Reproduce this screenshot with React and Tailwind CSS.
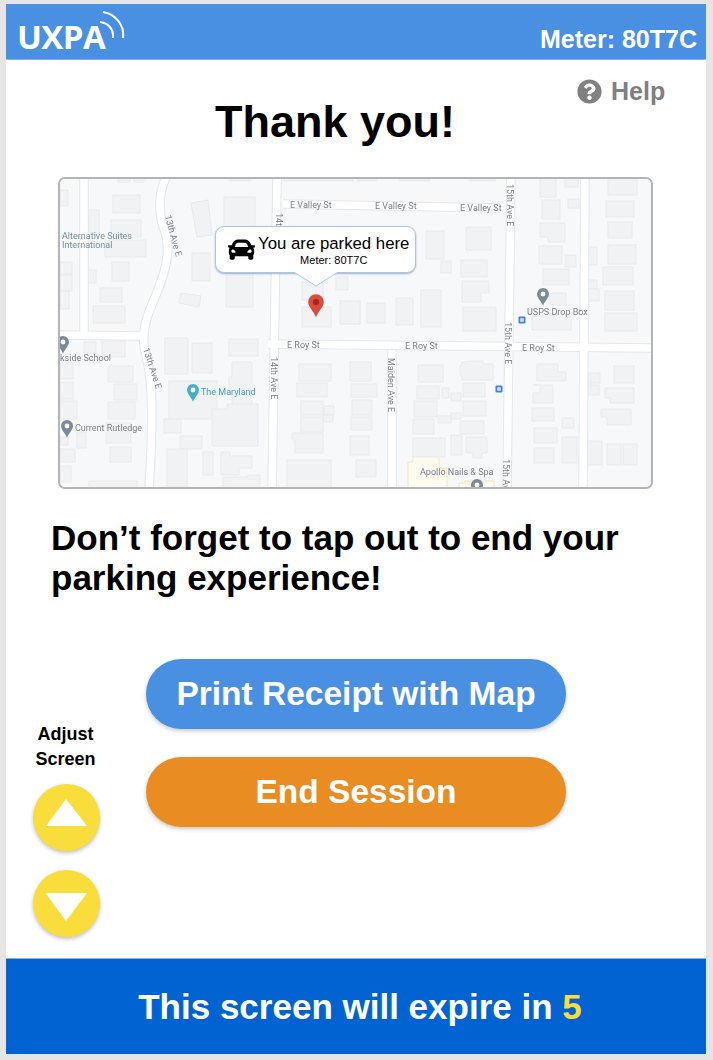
import React from "react";
import { FaCar, FaQuestionCircle } from "react-icons/fa";

const b = [
[113,195,27,18],[111,220,30,17],[105,240,41,17],[112,262,17,19],[88,270,8,13],[100,288,22,14],[93,306,32,17],[87,210,12,23],
[192,253,18,28],[224,197,31,40],[226,270,27,37],[302,282,21,18],[302,307,29,20],[336,277,12,13],[342,302,18,22],
[426,231,18,28],[441,261,10,12],[466,227,25,23],[461,260,26,17],[463,307,33,24],[421,290,20,37],[396,298,17,27],[367,303,18,20],[340,301,20,23],
[540,178,16,19],[565,177,13,10],[542,200,18,19],[568,199,11,9],[539,246,23,18],[565,255,11,12],[543,269,26,16],[550,293,16,12],[532,316,39,14],
[608,177,29,18],[606,201,28,16],[608,222,24,16],[608,245,28,19],[603,267,30,18],[605,291,29,19],[605,313,32,18],[586,247,11,18],[586,280,11,9],[586,289,13,12],
[165,338,23,36],[192,343,20,30],[229,339,29,17],[164,419,17,14],[180,436,22,13],[167,449,20,38],[203,452,10,23],[169,381,48,38],
[108,366,25,16],[114,384,23,16],[108,402,27,17],[106,423,25,20],[110,447,21,15],[77,432,9,16],[84,342,12,11],[102,341,23,16],
[60,363,13,16],[60,382,13,17],[60,401,17,18],[60,437,8,8],[60,449,15,13],[60,466,11,16],[89,481,48,8],
[299,364,32,17],[297,383,30,14],[301,401,22,14],[324,406,10,9],[323,415,10,7],[301,417,22,15],[287,460,44,29],
[350,362,21,19],[351,384,26,13],[352,400,20,15],[351,417,21,13],[350,436,19,19],[356,460,20,17],
[418,365,25,17],[417,386,22,13],[442,388,7,10],[451,393,10,8],[463,383,22,14],[414,401,23,16],[463,401,23,15],[438,416,13,7],[451,413,10,6],[413,419,21,15],[460,421,24,13],[413,438,32,19],[451,435,11,20],
[532,408,22,13],[562,418,12,10],[534,428,23,15],[534,448,20,15],[562,437,15,26],[588,373,12,10],[588,385,11,10],[614,366,20,17],[607,444,14,21],[623,444,14,21],[587,441,15,24],
[60,190,8,16],[60,262,12,12],[60,275,12,16],[60,291,9,18],[118,179,12,3],[134,179,10,3],[230,179,20,2],[283,179,70,2],[358,179,18,2],[400,179,30,2],[470,179,25,2],
];

const p = [
"M462 281h27v12h-8v9h-19z","M540 223h25v19h-17v-5h-8z","M462 362l12-1h9v3h10v16h-31v-3l-2-3v-8l2-2z","M466 437h21v16h-5v5h-9v-5h-7z",
"M537 364h21v8h8v9h-29z","M533 385h20v18h-20v-10h7v-8z","M605 388h29v15h-24v-5h-5z","M601 409h30v16h-24v-8h-6z",
"M232 362h20v47h-20v-14h-3v-18h3z","M212 409h15v-5h31v42h-46z","M221 452h9v4h22v12h-13v7h-18z","M223 487v-10h25v-2h12v14z",
"M292 433h31v20h-28v-12l-3-2z","M191 203l17-3 4 35-15 2z","M181 293l20 3-2 11-20-4z",
];

const yellow = "M408 462h5v-6h26v12h8v21h-39z";

const rd = [
"M283 204L500 208","M58 335L143 336","M268 344L653 348","M277 177L272 489","M84 177L84 335","M511 177L507 489","M392 350L392 489","M585 177L583 489",
"M166 177C158 195 158 215 166 235C172 260 160 285 149 312C143 328 142 342 146 355C152 380 154 410 149 489",
];

function T({ x, y, children, c = "#7b8086", s = 9, r, a = "start" }) {
  return <text x={x} y={y} fill={c} fontSize={s} textAnchor={a} fontFamily="Roboto, sans-serif" transform={r ? `rotate(${r} ${x} ${y})` : undefined}>{children}</text>;
}

function Pin({ x, y, c, dot = "#fff", s = 1 }) {
  return <g transform={`translate(${x} ${y}) scale(${s})`}><path d="M0 12C-1 8-6 4-6 0A6 6 0 0 1 6 0C6 4 1 8 0 12Z" fill={c} /><circle r="2.4" fill={dot} /></g>;
}

function Transit({ x, y }) {
  return <g><rect x={x} y={y} width="7" height="7" rx="1" fill="#4a80dd" /><rect x={x + 1.7} y={y + 1.7} width="3.6" height="3.6" fill="#cfe0fa" /></g>;
}

function MapArt() {
  return (
    <svg viewBox="60 179 591 308" className="block w-full h-full blur-[0.35px]">
      <rect x="58" y="177" width="595" height="312" fill="#f7f8fa" />
      <path d={yellow} fill="#fdfaf0" stroke="#f5e7bb" />
      <path d="M459 489v-6h6v-2h29v8z" fill="#fdfaf0" stroke="#f5e7bb" />
      {b.map((r, i) => <rect key={i} x={r[0]} y={r[1]} width={r[2]} height={r[3]} fill="#f1f2f4" stroke="#e9eaed" />)}
      {p.map((d, i) => <path key={i} d={d} fill="#f1f2f4" stroke="#e9eaed" />)}
      {rd.map((d, i) => <path key={i} d={d} fill="none" stroke="#e6e7ea" strokeWidth="9.5" />)}
      {rd.map((d, i) => <path key={i} d={d} fill="none" stroke="#ffffff" strokeWidth="7.5" />)}
      <T x={290} y={208}>E Valley St</T><T x={375} y={209}>E Valley St</T><T x={460} y={211}>E Valley St</T>
      <T x={287} y={348}>E Roy St</T><T x={405} y={349}>E Roy St</T><T x={522} y={351}>E Roy St</T>
      <T x={507} y={184} r={90}>15th Ave E</T><T x={505} y={322} r={90}>15th Ave E</T><T x={503} y={459} r={90}>15th Ave E</T>
      <T x={271} y={357} r={90}>14th Ave E</T><T x={276} y={213} r={90}>14th Ave E</T>
      <T x={165} y={216} r={75}>13th Ave E</T><T x={143} y={349} r={72}>13th Ave E</T>
      <T x={388} y={358} r={90}>Maiden Ave E</T>
      <T x={62} y={239} c="#6f8f9c">Alternative Suites</T><T x={62} y={248} c="#6f8f9c">International</T>
      <T x={111} y={361} a="end">Parkside School</T><T x={75} y={431}>Current Rutledge</T>
      <T x={201} y={395} c="#3f9fb5">The Maryland</T><T x={527} y={315}>USPS Drop Box</T><T x={420} y={475}>Apollo Nails &amp; Spa</T>
      <Pin x={543} y={294} c="#7b8b99" /><Pin x={67} y={426} c="#7b8b99" /><Pin x={193} y={390} c="#44b0c8" />
      <Pin x={63} y={342} c="#7b8b99" /><Pin x={477} y={485} c="#7b8b99" />
      <Transit x={518.5} y={316.5} /><Transit x={495.5} y={385.5} />
      <Pin x={316} y={302} c="#dc4b3e" dot="#a5261d" s={1.3} />
    </svg>
  );
}

function Btn({ c, children }) {
  return <div className={`w-[420px] h-[70px] pt-[1px] rounded-[35px] flex items-center justify-center text-white font-bold text-[33.5px] shadow-[0_2px_4px_rgba(0,0,0,0.22)] ${c}`}>{children}</div>;
}

function Round({ d }) {
  return (
    <div className="w-[67px] h-[67px] rounded-full bg-[#f8dd3b] shadow-[0_2px_4px_rgba(0,0,0,0.25)] flex items-center justify-center">
      <svg viewBox="0 0 67 67" className="w-[67px] h-[67px]"><path d={d} fill="#fff" /></svg>
    </div>
  );
}

export default function App() {
  return (
    <div className="w-[713px] h-[1060px] bg-[#e5e5e5] pt-[4px] pl-[6px] font-['Liberation_Sans',Arial,sans-serif]">
      <div className="w-[700px] h-[1050px] bg-white flex flex-col">
        <header className="h-[56px] bg-[#4a90e2] flex items-end justify-between pl-[11px] pr-[9px] border-b border-[#7fb0ea]">
          <div className="relative h-[56px] w-[112px]">
            <span className="absolute left-0 top-[14px] text-white text-[33px] leading-[40px] font-bold font-['Open_Sans',sans-serif] tracking-[-0.6px]">UXPA</span>
            <svg viewBox="0 0 40 40" className="absolute left-[78px] top-[8px] w-[40px] h-[40px]" fill="none" stroke="#fff" strokeWidth="2">
              <path d="M8 1C20 3 30 14 28 27" />
              <path d="M5 11C13 12 19 18 18 27" />
            </svg>
          </div>
          <span className="text-white font-bold text-[25px] leading-[28px] mb-[6px]">Meter: 80T7C</span>
        </header>
        <div className="flex items-start">
          <h1 className="ml-[209px] mt-[34px] text-[45px] leading-[56px] font-bold text-black">Thank you!</h1>
          <div className="ml-[122px] mt-[17px] flex items-center gap-[9px] text-[#808080]">
            <FaQuestionCircle className="w-[25px] h-[25px]" />
            <span className="font-bold text-[25px] leading-[28px]">Help</span>
          </div>
        </div>
        <div className="relative ml-[52px] mt-[27px] w-[595px] h-[312px] rounded-[7px] border-2 border-[#b4b4b4] overflow-hidden">
          <MapArt />
          <div className="absolute left-[155px] top-[47px] w-[201px] h-[47px] bg-white border border-[#a9c6ea] rounded-[9px] shadow-[0_1px_2px_rgba(60,90,130,0.45)] flex items-center pl-[12px]">
            <FaCar className="w-[27px] h-[27px] text-black shrink-0" />
            <div className="ml-[3px] flex flex-col items-center">
              <span className="text-[16.8px] leading-[20px] text-black mt-[2px]">You are parked here</span>
              <span className="text-[11px] leading-[13px] text-black">Meter: 80T7C</span>
            </div>
          </div>
          <svg viewBox="0 0 48 16" className="absolute left-[232px] top-[93px] w-[48px] h-[16px]">
            <path d="M2 0L24 14L46 0Z" fill="#fff" />
            <path d="M2 0L24 14L46 0" fill="none" stroke="#a9c6ea" />
          </svg>
        </div>
        <p className="ml-[45px] mt-[29px] text-[35px] leading-[40px] font-bold text-black w-[610px]">Don’t forget to tap out to end your parking experience!</p>
        <div className="flex flex-1 items-start">
          <div className="ml-[27px] mt-[124px] w-[67px] flex flex-col items-center">
            <div className="text-[18px] leading-[25px] font-bold text-black text-center whitespace-nowrap -translate-x-[1px]">Adjust<br />Screen</div>
            <div className="mt-[12px]"><Round d="M33 15L54 42H13Z" /></div>
            <div className="mt-[19px]"><Round d="M12.5 23H54L33 51Z" /></div>
          </div>
          <div className="ml-[46px] mt-[61px] flex flex-col gap-[28px]">
            <Btn c="bg-[#4a90e2]">Print Receipt with Map</Btn>
            <Btn c="bg-[#e98c21]">End Session</Btn>
          </div>
        </div>
        <footer className="h-[96px] bg-[#0063d1] border-t border-[#7fb0ea] flex items-center justify-center pl-[8px] text-white font-bold text-[35px] leading-[40px]">
          <span>This screen will expire in <span className="text-[#f8dd3b]">5</span></span>
        </footer>
      </div>
    </div>
  );
}
